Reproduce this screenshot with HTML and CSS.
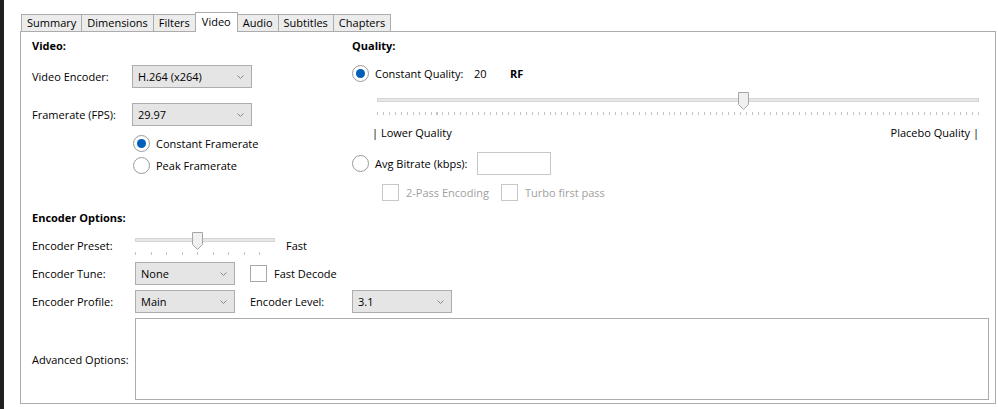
FILE: index.html
```html
<!DOCTYPE html>
<html>
<head>
<meta charset="utf-8">
<link rel="stylesheet" href="styles.css">
</head>
<body>
<div class="frame">
  <div class="tabs">
    <div class="tab">Summary</div>
    <div class="tab">Dimensions</div>
    <div class="tab">Filters</div>
    <div class="tab active">Video</div>
    <div class="tab">Audio</div>
    <div class="tab">Subtitles</div>
    <div class="tab">Chapters</div>
  </div>
  <div class="panel">
    <div class="top">
      <div class="col-video">
        <div class="heading">Video:</div>
        <div class="row row-enc">
          <span class="lbl lbl-video">Video Encoder:</span>
          <div class="select sel-wide"><span>H.264 (x264)</span><svg class="chev" width="7" height="4" viewBox="0 0 7 4"><path d="M0.5 0.5 L3.5 3.5 L6.5 0.5" fill="none" stroke="#8a8a8a" stroke-width="1"/></svg></div>
        </div>
        <div class="row row-fps">
          <span class="lbl lbl-video">Framerate (FPS):</span>
          <div class="select sel-wide"><span>29.97</span><svg class="chev" width="7" height="4" viewBox="0 0 7 4"><path d="M0.5 0.5 L3.5 3.5 L6.5 0.5" fill="none" stroke="#8a8a8a" stroke-width="1"/></svg></div>
        </div>
        <div class="radio-row rr-1"><span class="radio checked"></span><span>Constant Framerate</span></div>
        <div class="radio-row rr-2"><span class="radio"></span><span>Peak Framerate</span></div>
      </div>
      <div class="col-quality">
        <div class="heading">Quality:</div>
        <div class="radio-row cq"><span class="radio checked"></span><span class="cq-label">Constant Quality:</span><span class="cq-val">20</span><b class="cq-rf">RF</b></div>
        <div class="slider q-slider">
          <div class="track"></div>
          <div class="ticks q-ticks"></div>
          <svg class="thumb" style="left: calc(60.8% - 5.5px)" width="11" height="18" viewBox="0 0 11 18"><path d="M0.5 0.5 H10.5 V12.5 L5.5 17.5 L0.5 12.5 Z" fill="#f0f0f0" stroke="#a6a6a6"/></svg>
        </div>
        <div class="q-labels"><span>| Lower Quality</span><span>Placebo Quality |</span></div>
        <div class="radio-row avg"><span class="radio"></span><span class="avg-label">Avg Bitrate (kbps):</span><span class="textbox"></span></div>
        <div class="check-row disabled"><span class="check"></span><span class="chk-lbl pass2">2-Pass Encoding</span><span class="check"></span><span class="chk-lbl">Turbo first pass</span></div>
      </div>
    </div>
    <div class="heading enc-heading">Encoder Options:</div>
    <div class="row row-preset">
      <span class="lbl lbl-enc">Encoder Preset:</span>
      <div class="slider p-slider">
        <div class="track"></div>
        <div class="ticks p-ticks"></div>
        <svg class="thumb" style="left: calc(44.4% - 5.5px)" width="11" height="18" viewBox="0 0 11 18"><path d="M0.5 0.5 H10.5 V12.5 L5.5 17.5 L0.5 12.5 Z" fill="#f0f0f0" stroke="#a6a6a6"/></svg>
      </div>
      <span class="fast">Fast</span>
    </div>
    <div class="row row-tune">
      <span class="lbl lbl-enc">Encoder Tune:</span>
      <div class="select sel-narrow"><span>None</span><svg class="chev" width="7" height="4" viewBox="0 0 7 4"><path d="M0.5 0.5 L3.5 3.5 L6.5 0.5" fill="none" stroke="#8a8a8a" stroke-width="1"/></svg></div>
      <span class="check fd-check"></span><span class="chk-lbl">Fast Decode</span>
    </div>
    <div class="row row-profile">
      <span class="lbl lbl-enc">Encoder Profile:</span>
      <div class="select sel-narrow"><span>Main</span><svg class="chev" width="7" height="4" viewBox="0 0 7 4"><path d="M0.5 0.5 L3.5 3.5 L6.5 0.5" fill="none" stroke="#8a8a8a" stroke-width="1"/></svg></div>
      <span class="lbl lbl-level">Encoder Level:</span>
      <div class="select sel-narrow"><span>3.1</span><svg class="chev" width="7" height="4" viewBox="0 0 7 4"><path d="M0.5 0.5 L3.5 3.5 L6.5 0.5" fill="none" stroke="#8a8a8a" stroke-width="1"/></svg></div>
    </div>
    <div class="row row-adv">
      <span class="lbl lbl-enc">Advanced Options:</span>
      <div class="textarea"></div>
    </div>
  </div>
</div>
</body>
</html>
```
FILE: styles.css
```css
* { box-sizing: border-box; }
html, body { margin: 0; padding: 0; background: #ffffff; }
body {
  font-family: "Open Sans", "Noto Sans", sans-serif;
  font-size: 11px;
  color: #000;
  width: 998px;
  height: 409px;
  overflow: hidden;
}
.frame {
  border-left: 4px solid #202020;
  height: 409px;
  padding: 12px 0 0 16px;
}
.tabs {
  display: flex;
  align-items: flex-end;
  height: 19px;
  margin-left: 1px;
  position: relative;
  z-index: 2;
}
.tab {
  height: 17px;
  line-height: 16px;
  padding: 0 5px;
  border: 1px solid #acacac;
  border-bottom: none;
  background: #ececec;
  margin-left: -1px;
  text-align: center;
}
.tab:first-child { margin-left: 0; }
.tab.active {
  height: 20px;
  background: #fff;
  margin-bottom: -1px;
  line-height: 18px;
  padding: 0 6px;
}
.panel {
  width: 976px;
  height: 373px;
  border: 1px solid #acacac;
  padding: 6px 6px 3px 11px;
  position: relative;
}
.top {
  display: grid;
  grid-template-columns: 320px 1fr;
  height: 165px;
  margin-right: 10px;
}
.heading {
  font-weight: bold;
  line-height: 16px;
  height: 16px;
}
.row {
  display: flex;
  align-items: center;
}
.lbl-video { width: 100px; }
.lbl-enc { width: 103px; }
.row-enc { margin-top: 11px; }
.row-fps { margin-top: 15px; }
.select {
  height: 23px;
  border: 1px solid #adadad;
  background: #e5e5e5;
  display: flex;
  align-items: center;
  justify-content: space-between;
  padding: 0 7px 0 5px;
}
.sel-wide { width: 120px; }
.sel-narrow { width: 100px; }
.chev { display: block; }
.radio-row {
  display: flex;
  align-items: center;
  height: 18px;
}
.rr-1 { margin-top: 8px; margin-left: 101px; }
.rr-2 { margin-top: 4px; margin-left: 101px; }
.radio {
  width: 17px;
  height: 17px;
  border-radius: 50%;
  border: 1px solid #9a9a9a;
  background: #fff;
  margin-right: 6px;
  display: flex;
  align-items: center;
  justify-content: center;
  flex: none;
}
.radio.checked::after {
  content: "";
  width: 9px;
  height: 9px;
  border-radius: 50%;
  background: #005fb8;
}
.cq { margin-top: 10px; }
.cq-label { width: 99px; }
.cq-val { width: 36px; }
.cq-rf { font-weight: bold; }
.slider {
  position: relative;
  height: 24px;
}
.q-slider { margin: 10px 0 0 25px; }
.track {
  position: absolute;
  left: 0; right: 0;
  top: 6px;
  height: 4px;
  border: 1px solid #d6d6d6;
  background: #e6e8e8;
}
.ticks {
  position: absolute;
  left: 0; right: 0;
  top: 20px;
  height: 3px;
}
.q-ticks {
  background: repeating-linear-gradient(to right, #c4c4c4 0 1px, transparent 1px 5.95px);
}
.p-ticks {
  background: repeating-linear-gradient(to right, #c4c4c4 0 1px, transparent 1px 15.55px);
}
.thumb {
  position: absolute;
  top: 0;
}
.q-labels {
  display: flex;
  justify-content: space-between;
  margin: 9px 0 0 20px;
  line-height: 16px;
}
.avg { margin-top: 11px; height: 23px; }
.avg-label { width: 102px; }
.textbox {
  width: 74px;
  height: 23px;
  border: 1px solid #c8c8c8;
  background: #fff;
}
.check-row {
  display: flex;
  align-items: center;
  height: 18px;
  margin: 8px 0 0 30px;
}
.check {
  width: 17px;
  height: 17px;
  border: 1px solid #a8a8a8;
  background: #fff;
  margin-right: 7px;
  flex: none;
}
.disabled { color: #a0a0a0; }
.disabled .check { border-color: #c8c8c8; }
.pass2 { width: 95px; }
.enc-heading { margin-top: 7px; }
.row-preset {
  margin-top: 6px;
  height: 24px;
  align-items: flex-start;
}
.row-preset .lbl { padding-top: 6px; line-height: 16px; }
.p-slider { width: 140px; }
.fast { margin-left: 11px; padding-top: 6px; line-height: 16px; }
.row-tune { margin-top: 6px; }
.fd-check { margin-left: 15px; }
.row-profile { margin-top: 5px; }
.lbl-level { margin-left: 15px; width: 102px; }
.row-adv { margin-top: 5px; }
.textarea {
  width: 854px;
  height: 82px;
  border: 1px solid #acacac;
  background: #fff;
}
```
